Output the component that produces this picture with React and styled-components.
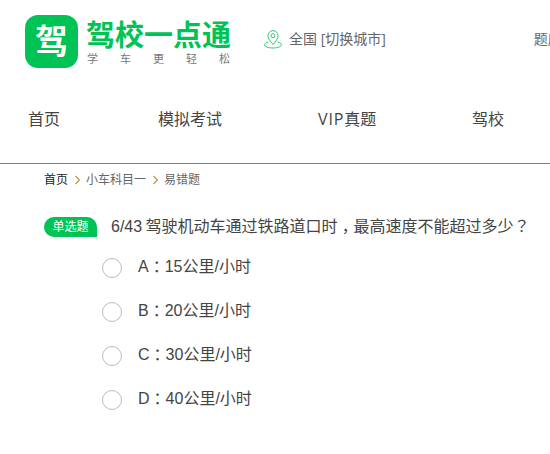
import styled, { createGlobalStyle } from "styled-components";

const green = "#00c356";

const crumbs = ["首页", "小车科目一", "易错题"];

const options = [
  { key: "A", speed: 15 },
  { key: "B", speed: 20 },
  { key: "C", speed: 30 },
  { key: "D", speed: 40 },
];

export default function App() {
  return (
    <Page>
      <GlobalStyle />
      <Header>
        <LogoMark>驾</LogoMark>
        <Brand>
          <BrandName>驾校一点通</BrandName>
          <Slogan>
            {[..."学车更轻松"].map((char) => (
              <span key={char}>{char}</span>
            ))}
          </Slogan>
        </Brand>
        <PinIcon />
        <City>全国 [切换城市]</City>
        <TopLink>题库</TopLink>
      </Header>

      <Nav>
        <NavItem $width={130}>首页</NavItem>
        <NavItem $width={160}>模拟考试</NavItem>
        <NavItem $width={154}>
          <Latin>VIP</Latin>真题
        </NavItem>
        <NavItem $width={60}>驾校</NavItem>
      </Nav>

      <Breadcrumb>
        {crumbs.map((crumb, i) => (
          <Crumb key={crumb} $first={i === 0}>
            {i > 0 && <Chevron />}
            {crumb}
          </Crumb>
        ))}
      </Breadcrumb>

      <Question>
        <Tag>单选题</Tag>
        <Title>
          6/43 驾驶机动车通过铁路道口时<Punct $drop={5}>，</Punct>
          最高速度不能超过多少
          <Punct $drop={0}>？</Punct>
        </Title>
      </Question>

      <Options>
        {options.map(({ key, speed }) => (
          <Option key={key}>
            <Radio />
            <Answer>
              {key}
              <Punct $drop={1}>：</Punct>
              {speed}公里/小时
            </Answer>
          </Option>
        ))}
      </Options>
    </Page>
  );
}

const PinIcon = () => (
  <Pin width="18" height="20" viewBox="0 0 18 20">
    <path d="M9 14.5C6.3 11 3.9 8.8 3.9 5.7a5.1 5.1 0 0 1 10.2 0C14.1 8.8 11.7 11 9 14.5Z" />
    <circle cx="9" cy="5.7" r="2" />
    <path d="M4.5 12C1.8 12.6.6 13.5.6 14.7c0 1.9 3.7 3.3 8.4 3.3s8.4-1.4 8.4-3.3c0-1.2-1.2-2.1-3.9-2.7" />
  </Pin>
);

const Chevron = () => (
  <ChevronSvg width="5" height="10" viewBox="0 0 5 10">
    <path d="M.5 1 4.3 5 .5 9" />
  </ChevronSvg>
);

const GlobalStyle = createGlobalStyle`
  body {
    margin: 0;
    background: #fff;
    overflow: hidden;
  }
`;

const Page = styled.div`
  width: 550px;
  height: 454px;
  overflow: hidden;
  color: #444;
  font-family: "Liberation Sans", "Noto Sans CJK SC", sans-serif;
  white-space: nowrap;
`;

const Header = styled.header`
  display: flex;
  align-items: flex-start;
  height: 85px;
  padding: 15px 0 0 25px;
  box-sizing: border-box;
`;

const LogoMark = styled.div`
  flex: none;
  width: 53px;
  height: 53px;
  border-radius: 13px;
  background: ${green};
  color: #fff;
  font-size: 33px;
  font-weight: 700;
  line-height: 54px;
  text-align: center;
`;

const Brand = styled.div`
  flex: none;
  width: 145px;
  margin-left: 8px;
`;

const BrandName = styled.div`
  height: 38px;
  color: ${green};
  font-size: 29px;
  font-weight: 700;
  line-height: 42px;
`;

const Slogan = styled.div`
  display: flex;
  justify-content: space-between;
  padding: 0 1px;
  color: #777;
  font-size: 11px;
  line-height: 12px;
`;

const Pin = styled.svg`
  flex: none;
  margin: 15px 0 0 33px;
  fill: none;
  stroke: #2fca72;
  stroke-width: 1;
`;

const City = styled.span`
  margin: 14px 0 0 7px;
  color: #666;
  font-family: "Open Sans", "Noto Sans CJK SC", sans-serif;
  font-size: 14px;
  line-height: 20px;
`;

const TopLink = styled(City)`
  margin-left: 148px;
`;

const Nav = styled.nav`
  display: flex;
  height: 78px;
  padding-left: 28px;
  border-bottom: 1px solid ${green};
  font-family: "Open Sans", "Noto Sans CJK SC", sans-serif;
  font-size: 16px;
  line-height: 68px;
`;

const NavItem = styled.a`
  flex: none;
  width: ${(props) => props.$width}px;
`;

const Latin = styled.span`
  letter-spacing: 0.9px;
`;

const Breadcrumb = styled.div`
  display: flex;
  padding: 8px 0 0 44px;
  font-size: 12px;
  line-height: 16px;
`;

const Crumb = styled.span`
  display: flex;
  align-items: center;
  color: ${(props) => (props.$first ? "#222" : "#666")};
`;

const ChevronSvg = styled.svg`
  margin: 0 6px 0 7px;
  fill: none;
  stroke: #b59a55;
  stroke-width: 1.2;
`;

const Question = styled.div`
  display: flex;
  align-items: center;
  height: 24px;
  margin-top: 27px;
  padding-left: 44px;
`;

const Tag = styled.span`
  width: 53px;
  height: 20px;
  border-radius: 10px 10px 0 10px;
  background: ${green};
  color: #fff;
  font-size: 12px;
  line-height: 21px;
  text-align: center;
`;

const Title = styled.span`
  margin-left: 14px;
  font-size: 16px;
  line-height: 24px;
  word-spacing: -1px;
`;

// full-width punctuation centred in its box, lowered towards the baseline
const Punct = styled.span`
  font-family: "Noto Sans CJK TC", sans-serif;
  line-height: 0;
  vertical-align: -${(props) => props.$drop}px;
`;

const Options = styled.div`
  padding: 6px 0 0 102px;
`;

const Option = styled.label`
  display: flex;
  align-items: center;
  height: 44px;
  font-size: 16px;
`;

const Radio = styled.i`
  width: 18px;
  height: 18px;
  margin: 2px 16px 0 0;
  border: 1px solid #bbb;
  border-radius: 50%;
`;

const Answer = styled.span`
  line-height: 24px;
`;
